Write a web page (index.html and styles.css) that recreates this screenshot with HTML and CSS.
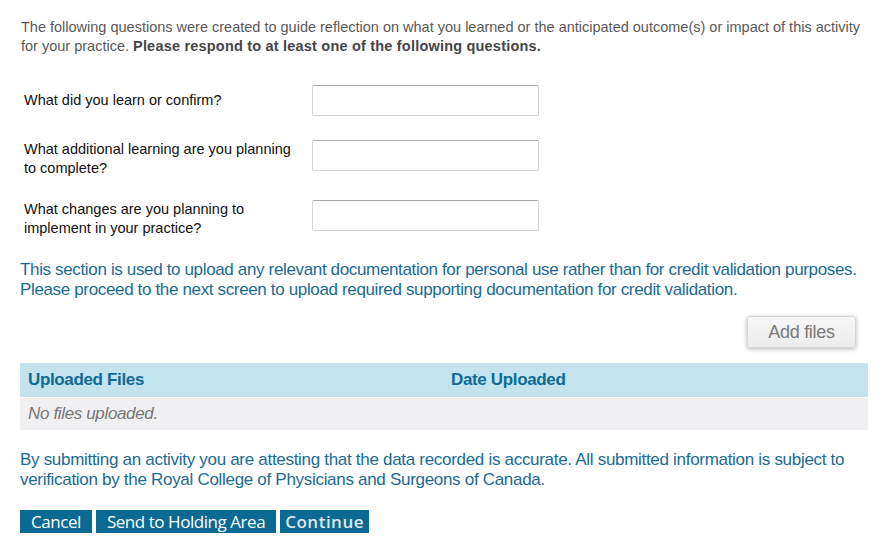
FILE: index.html
```html
<!DOCTYPE html>
<html lang="en">
<head>
  <meta charset="UTF-8">
  <title>Reflection</title>
  <link rel="stylesheet" href="styles.css">
</head>
<body>
  <div class="page">
    <p class="intro">The following questions were created to guide reflection on what you learned or the anticipated outcome(s) or impact of this activity for your practice. <strong>Please respond to at least one of the following questions.</strong></p>

    <div class="questions">
      <div class="question">
        <label for="q1">What did you learn or confirm?</label>
        <input type="text" id="q1">
      </div>
      <div class="question">
        <label for="q2">What additional learning are you planning to complete?</label>
        <input type="text" id="q2">
      </div>
      <div class="question">
        <label for="q3">What changes are you planning to implement in your practice?</label>
        <input type="text" id="q3">
      </div>
    </div>

    <p class="note">This section is used to upload any relevant documentation for personal use rather than for credit validation purposes. Please proceed to the next screen to upload required supporting documentation for credit validation.</p>

    <div class="upload-row">
      <button type="button" class="add-files">Add files</button>
    </div>

    <table class="files-table">
      <thead>
        <tr>
          <th class="col-name">Uploaded Files</th>
          <th>Date Uploaded</th>
        </tr>
      </thead>
      <tbody>
        <tr>
          <td colspan="2" class="empty">No files uploaded.</td>
        </tr>
      </tbody>
    </table>

    <p class="note attest">By submitting an activity you are attesting that the data recorded is accurate. All submitted information is subject to verification by the Royal College of Physicians and Surgeons of Canada.</p>

    <div class="actions">
      <button type="button" class="btn">Cancel</button>
      <button type="button" class="btn">Send to Holding Area</button>
      <button type="button" class="btn btn-continue">Continue</button>
    </div>
  </div>
</body>
</html>
```

FILE: styles.css
```css
body {
  margin: 0;
  padding: 0;
  background-color: #fff;
  font-family: 'Liberation Sans', Arial, sans-serif;
}

.page {
  padding: 18px 18px 0 20px;
}

.intro {
  margin: 0 0 0 1px;
  font-size: 14.5px;
  line-height: 19px;
  color: #595959;
}

.intro strong {
  color: #454545;
  letter-spacing: 0.2px;
}

.questions {
  margin-top: 29px;
  display: flex;
  flex-direction: column;
  gap: 22px;
}

.question {
  display: flex;
  align-items: flex-start;
  padding-left: 4px;
}

.question label {
  width: 274px;
  margin-right: 14px;
  font-size: 14.5px;
  line-height: 19px;
  color: #111;
}

.question:first-child label {
  padding: 6px 0 8px;
}

.question input {
  width: 227px;
  height: 31px;
  box-sizing: border-box;
  border: 1px solid #d4d4d4;
  border-top-color: #a8a8a8;
  border-radius: 2px;
  background: #fff;
  outline: none;
}

.note {
  margin: 22px 0 0;
  font-size: 17px;
  line-height: 20px;
  color: #1b6b93;
  letter-spacing: -0.35px;
}

.upload-row {
  display: flex;
  justify-content: flex-end;
  margin-top: 16px;
  padding-right: 12px;
}

.add-files {
  width: 109px;
  height: 32px;
  border: 1px solid #d6d6d6;
  border-radius: 3px;
  background: linear-gradient(#f7f7f7, #ececec);
  box-shadow: 0 1px 4px rgba(0, 0, 0, 0.3);
  color: #7a7a7a;
  font-family: 'Liberation Sans', Arial, sans-serif;
  font-size: 18px;
  letter-spacing: -0.3px;
}

.files-table {
  width: 848px;
  margin-top: 15px;
  border-collapse: collapse;
}

.files-table th {
  height: 34px;
  padding: 0 8px;
  text-align: left;
  background-color: #c3e3ee;
  color: #0f6a96;
  font-size: 17px;
  letter-spacing: -0.35px;
  border-bottom: 1px solid #fff;
}

.files-table .col-name {
  width: 407px;
}

.files-table td {
  height: 32px;
  padding: 0 8px;
  background-color: #f0eff1;
}

.empty {
  font-style: italic;
  color: #777;
  font-size: 17px;
  letter-spacing: -0.35px;
}

.attest {
  margin-top: 20px;
  letter-spacing: -0.3px;
}

.actions {
  display: flex;
  gap: 4px;
  margin-top: 20px;
}

.btn {
  height: 23px;
  padding: 0 11px;
  border: none;
  background-color: #0b6a93;
  color: #fff;
  font-family: 'Open Sans', sans-serif;
  font-size: 17px;
  line-height: 23px;
  letter-spacing: -0.45px;
}

.btn-continue {
  padding: 0 5px;
  color: #dfe9ee;
  font-weight: 600;
  letter-spacing: 0.5px;
}
```
